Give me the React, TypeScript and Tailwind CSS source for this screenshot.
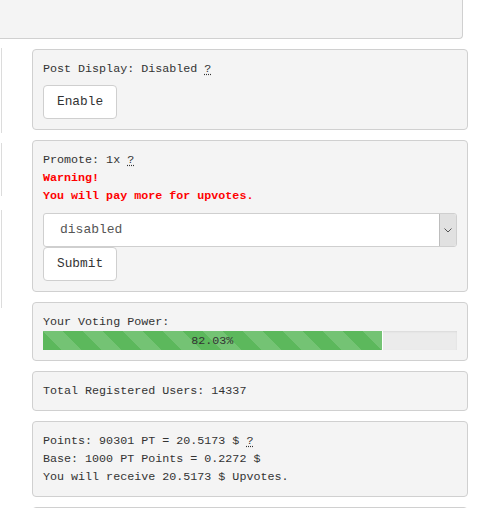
import React from "react";

const mono = "font-['Liberation_Mono','DejaVu_Sans_Mono',monospace]";
const card =
  "rounded-[4px] border border-[#d0d0d0] bg-[#f4f4f4] px-[10px] pt-[10px] pb-[10px] text-[11.7px] leading-[18px] text-[#333]";
const btn =
  "h-[34px] rounded-[4px] border border-[#cfcfcf] bg-white px-[13px] text-[12.8px] text-[#333]";

function Help() {
  return (
    <abbr className="cursor-help underline decoration-dotted underline-offset-2" title="help">
      ?
    </abbr>
  );
}

export default function App() {
  const power = 82.03;
  return (
    <div className={`${mono} h-[508px] w-[492px] overflow-hidden bg-white`}>
      <div className="h-[39px] w-[463px] rounded-br-[4px] border-r border-b border-[#d0d0d0] bg-[#f4f4f4]" />

      <div className="flex">
        <div className="w-[2px] shrink-0">
          <div className="mt-[9px] h-[85px] border-r border-[#dcdcdc]" />
          <div className="mt-[10px] h-[53px] border-r border-[#dcdcdc]" />
          <div className="mt-[14px] h-[98px] border-r border-[#dcdcdc]" />
        </div>

        <div className="ml-[30px] mt-[10px] flex w-[436px] flex-col gap-[10px]">
          <div className={card}>
            <p>
              Post Display: Disabled <Help />
            </p>
            <button className={`${btn} mt-[7px]`}>Enable</button>
          </div>

          <div className={card}>
            <p>
              Promote: 1x <Help />
            </p>
            <p className="font-bold text-[#ff0000]">Warning!</p>
            <p className="font-bold text-[#ff0000]">You will pay more for upvotes.</p>
            <div className="mt-[8px] flex h-[34px] w-full items-stretch rounded-[3px] border border-[#cfcfcf] bg-white">
              <span className="flex flex-1 items-center pl-[16px] text-[13px] text-[#555]">disabled</span>
              <span className="flex w-[17px] items-center justify-center rounded-r-[2px] border-l border-[#bdbdbd] bg-[#e1e1e1]">
                <svg width="8" height="5" viewBox="0 0 8 5" fill="none">
                  <path d="M0.5 0.5 L4 4 L7.5 0.5" stroke="#555" strokeWidth="1" />
                </svg>
              </span>
            </div>
            <button className={btn}>Submit</button>
          </div>

          <div className={card}>
            <p>Your Voting Power:</p>
            <div className="h-[19px] w-full overflow-hidden bg-[#ebebeb] shadow-[inset_0_1px_2px_rgba(0,0,0,0.08)]">
              <div
                className="flex h-full items-center justify-center border-r border-white bg-[#5cb85c] bg-[linear-gradient(45deg,rgba(255,255,255,0.15)_25%,transparent_25%,transparent_50%,rgba(255,255,255,0.15)_50%,rgba(255,255,255,0.15)_75%,transparent_75%,transparent)] bg-size-[40px_40px] text-[11.7px] text-[#333]"
                style={{ width: `${power}%` }}
              >
                {power.toFixed(2)}%
              </div>
            </div>
          </div>

          <div className={card}>
            <p>Total Registered Users: 14337</p>
          </div>

          <div className={card}>
            <p>
              Points: 90301 PT = 20.5173 $ <Help />
            </p>
            <p>Base: 1000 PT Points = 0.2272 $</p>
            <p>You will receive 20.5173 $ Upvotes.</p>
          </div>

          <div className={`${card} h-[40px]`} />
        </div>
      </div>
    </div>
  );
}
